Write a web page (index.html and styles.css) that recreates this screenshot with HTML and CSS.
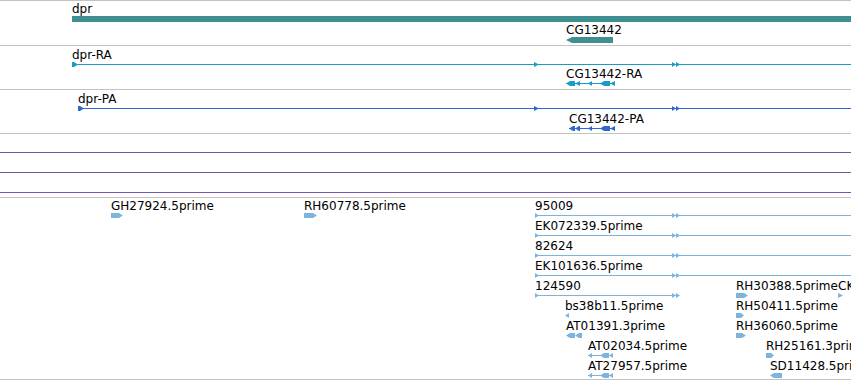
FILE: index.html
```html
<!DOCTYPE html>
<html lang="en">
  <head>
    <meta charset="UTF-8" />
    <title>dpr region</title>
    <link rel="stylesheet" href="styles.css">
  </head>
  <body>
    <div class="browser">
      <!-- gene span -->
      <div class="track track-gene">
        <div class="feat" style="left:72px;top:2px">
          <div class="label">dpr</div>
          <svg class="glyph c-gene" width="800" height="6"><rect x="0" y="0" width="800" height="6" fill="currentColor"/></svg>
        </div>
        <div class="feat" style="left:566px;top:23px">
          <div class="label">CG13442</div>
          <svg class="glyph c-gene" width="48" height="6"><polygon points="0,3 6,0 47,0 47,6 6,6" fill="currentColor"/></svg>
        </div>
      </div>
      <!-- transcripts -->
      <div class="track track-tx">
        <div class="feat" style="left:72px;top:3px">
          <div class="label">dpr-RA</div>
          <svg class="glyph c-ra" width="800" height="5">
            <line x1="0" y1="2.5" x2="800" y2="2.5" stroke="currentColor"/>
            <polygon points="0,0 2,0 6,2.5 2,5 0,5" fill="currentColor"/>
            <polygon points="462,0 467,2.5 462,5" fill="currentColor"/>
            <polygon points="600,0 604,2.5 600,5" fill="currentColor"/>
            <polygon points="604,0 608,2.5 604,5" fill="currentColor"/>
          </svg>
        </div>
        <div class="feat" style="left:566px;top:22px">
          <div class="label">CG13442-RA</div>
          <svg class="glyph c-ra" width="50" height="5">
            <line x1="0" y1="2.5" x2="49" y2="2.5" stroke="currentColor"/>
            <polygon points="0,2.5 4,0 9,0 9,5 4,5" fill="currentColor"/>
            <polygon points="9,2.5 14,0 14,5" fill="currentColor"/>
            <polygon points="22,2.5 26,0 26,5" fill="currentColor"/>
            <polygon points="34,2.5 38,0 44,0 44,5 38,5" fill="currentColor"/>
            <polygon points="44,2.5 49,0 49,5" fill="currentColor"/>
          </svg>
        </div>
      </div>
      <div class="track track-tx">
        <div class="feat" style="left:78px;top:3px">
          <div class="label">dpr-PA</div>
          <svg class="glyph c-pa" width="800" height="5">
            <line x1="0" y1="2.5" x2="800" y2="2.5" stroke="currentColor"/>
            <polygon points="0,0 2,0 6,2.5 2,5 0,5" fill="currentColor"/>
            <polygon points="456,0 461,2.5 456,5" fill="currentColor"/>
            <polygon points="594,0 598,2.5 594,5" fill="currentColor"/>
            <polygon points="598,0 602,2.5 598,5" fill="currentColor"/>
          </svg>
        </div>
        <div class="feat" style="left:569px;top:23px">
          <div class="label">CG13442-PA</div>
          <svg class="glyph c-pa" width="47" height="5">
            <line x1="0" y1="2.5" x2="46" y2="2.5" stroke="currentColor"/>
            <polygon points="0,2.5 4,0 6,0 6,5 4,5" fill="currentColor"/>
            <polygon points="6,2.5 10,0 11,0 11,5 10,5" fill="currentColor"/>
            <polygon points="19,2.5 23,0 23,5" fill="currentColor"/>
            <polygon points="31,2.5 35,0 41,0 41,5 35,5" fill="currentColor"/>
            <polygon points="41,2.5 46,0 46,5" fill="currentColor"/>
          </svg>
        </div>
      </div>
      <!-- empty xy tracks -->
      <div class="track track-wig first"></div>
      <div class="track track-wig"></div>
      <div class="track track-wig"></div>
      <div class="track track-gap"></div>
      <!-- ESTs -->
      <div class="track track-est">
        <div class="feat" style="left:111px;top:2px">
          <div class="label">GH27924.5prime</div>
          <svg class="glyph c-est" width="12" height="5"><polygon points="0,0 8,0 12,2.5 8,5 0,5" fill="currentColor"/></svg>
        </div>
        <div class="feat" style="left:304px;top:2px">
          <div class="label">RH60778.5prime</div>
          <svg class="glyph c-est" width="13" height="5"><polygon points="0,0 9,0 13,2.5 9,5 0,5" fill="currentColor"/></svg>
        </div>
        <div class="feat" style="left:535px;top:2px">
          <div class="label">95009</div>
          <svg class="glyph c-est" width="400" height="5">
            <line x1="0" y1="2.5" x2="400" y2="2.5" stroke="currentColor"/>
            <polygon points="0,0 4,2.5 0,5" fill="currentColor"/>
            <polygon points="137,0 141,2.5 137,5" fill="currentColor"/>
            <polygon points="141,0 145,2.5 141,5" fill="currentColor"/>
          </svg>
        </div>
        <div class="feat" style="left:535px;top:22px">
          <div class="label">EK072339.5prime</div>
          <svg class="glyph c-est" width="400" height="5">
            <line x1="0" y1="2.5" x2="400" y2="2.5" stroke="currentColor"/>
            <polygon points="0,0 4,2.5 0,5" fill="currentColor"/>
            <polygon points="137,0 141,2.5 137,5" fill="currentColor"/>
            <polygon points="141,0 145,2.5 141,5" fill="currentColor"/>
          </svg>
        </div>
        <div class="feat" style="left:535px;top:42px">
          <div class="label">82624</div>
          <svg class="glyph c-est" width="400" height="5">
            <line x1="0" y1="2.5" x2="400" y2="2.5" stroke="currentColor"/>
            <polygon points="0,0 4,2.5 0,5" fill="currentColor"/>
            <polygon points="137,0 141,2.5 137,5" fill="currentColor"/>
            <polygon points="141,0 145,2.5 141,5" fill="currentColor"/>
          </svg>
        </div>
        <div class="feat" style="left:535px;top:62px">
          <div class="label">EK101636.5prime</div>
          <svg class="glyph c-est" width="400" height="5">
            <line x1="0" y1="2.5" x2="400" y2="2.5" stroke="currentColor"/>
            <polygon points="0,0 4,2.5 0,5" fill="currentColor"/>
            <polygon points="137,0 141,2.5 137,5" fill="currentColor"/>
            <polygon points="141,0 145,2.5 141,5" fill="currentColor"/>
          </svg>
        </div>
        <div class="feat" style="left:535px;top:82px">
          <div class="label">124590</div>
          <svg class="glyph c-est" width="146" height="5">
            <line x1="0" y1="2.5" x2="142" y2="2.5" stroke="currentColor"/>
            <polygon points="0,0 4,2.5 0,5" fill="currentColor"/>
            <polygon points="137,0 141,2.5 137,5" fill="currentColor"/>
            <polygon points="141,0 145,2.5 141,5" fill="currentColor"/>
          </svg>
        </div>
        <div class="feat" style="left:736px;top:82px">
          <div class="label">RH30388.5prime</div>
          <svg class="glyph c-est" width="12" height="5"><polygon points="0,0 8,0 12,2.5 8,5 0,5" fill="currentColor"/></svg>
        </div>
        <div class="feat" style="left:838px;top:82px">
          <div class="label">CK02372.5prime</div>
          <svg class="glyph c-est" width="6" height="5"><polygon points="0,0 5,2.5 0,5" fill="currentColor"/></svg>
        </div>
        <div class="feat" style="left:565px;top:102px">
          <div class="label">bs38b11.5prime</div>
          <svg class="glyph c-est" width="4" height="5"><polygon points="0,2.5 4,0 4,5" fill="currentColor"/></svg>
        </div>
        <div class="feat" style="left:736px;top:102px">
          <div class="label">RH50411.5prime</div>
          <svg class="glyph c-est" width="8" height="5"><polygon points="0,0 5,0 8,2.5 5,5 0,5" fill="currentColor"/></svg>
        </div>
        <div class="feat" style="left:566px;top:122px">
          <div class="label">AT01391.3prime</div>
          <svg class="glyph c-est" width="16" height="5">
            <polygon points="0,2.5 4,0 9,0 9,5 4,5" fill="currentColor"/>
            <polygon points="9,2.5 13,0 16,0 16,5 13,5" fill="currentColor"/>
          </svg>
        </div>
        <div class="feat" style="left:736px;top:122px">
          <div class="label">RH36060.5prime</div>
          <svg class="glyph c-est" width="10" height="5"><polygon points="0,0 6,0 10,2.5 6,5 0,5" fill="currentColor"/></svg>
        </div>
        <div class="feat" style="left:588px;top:142px">
          <div class="label">AT02034.5prime</div>
          <svg class="glyph c-est" width="26" height="5">
            <line x1="0" y1="2.5" x2="25" y2="2.5" stroke="currentColor"/>
            <polygon points="0,2.5 4,0 4,5" fill="currentColor"/>
            <polygon points="12,2.5 16,0 21,0 21,5 16,5" fill="currentColor"/>
            <polygon points="21,2.5 25,0 25,5" fill="currentColor"/>
          </svg>
        </div>
        <div class="feat" style="left:766px;top:142px">
          <div class="label">RH25161.3prime</div>
          <svg class="glyph c-est" width="8" height="5"><polygon points="0,0 5,0 8,2.5 5,5 0,5" fill="currentColor"/></svg>
        </div>
        <div class="feat" style="left:588px;top:162px">
          <div class="label">AT27957.5prime</div>
          <svg class="glyph c-est" width="26" height="5">
            <line x1="0" y1="2.5" x2="25" y2="2.5" stroke="currentColor"/>
            <polygon points="0,2.5 4,0 4,5" fill="currentColor"/>
            <polygon points="12,2.5 16,0 21,0 21,5 16,5" fill="currentColor"/>
            <polygon points="21,2.5 25,0 25,5" fill="currentColor"/>
          </svg>
        </div>
        <div class="feat" style="left:770px;top:162px">
          <div class="label">SD11428.5prime</div>
          <svg class="glyph c-est" width="12" height="5"><polygon points="0,2.5 4,0 12,0 12,5 4,5" fill="currentColor"/></svg>
        </div>
      </div>
    </div>
  </body>
</html>
```

FILE: styles.css
```css
body {
  margin: 0;
  background: #fff;
  color: #000;
  font-family: "DejaVu Sans", sans-serif;
  font-size: 12px;
}
.browser {
  border-top: 1px solid #c3c3c3;
  overflow: hidden;
}
.track {
  position: relative;
  overflow: hidden;
  border-bottom: 1px solid #c3c3c3;
}
.track-gene {
  height: 44px;
}
.track-tx {
  height: 43px;
}
.track-wig {
  height: 19px;
  border-bottom-color: #7353b3;
}
.track-wig.first {
  height: 18px;
}
.track-gap {
  height: 4px;
}
.track-est {
  height: 181px;
}
/* features sit at their genome coordinate */
.feat {
  position: absolute;
  white-space: nowrap;
}
.label {
  height: 13px;
  line-height: 13px;
}
.glyph {
  display: block;
}
.c-gene {
  color: #408f90;
}
.c-ra {
  color: #1a9cc4;
}
.c-pa {
  color: #2f68cc;
}
.c-est {
  color: #7db4de;
}
```
